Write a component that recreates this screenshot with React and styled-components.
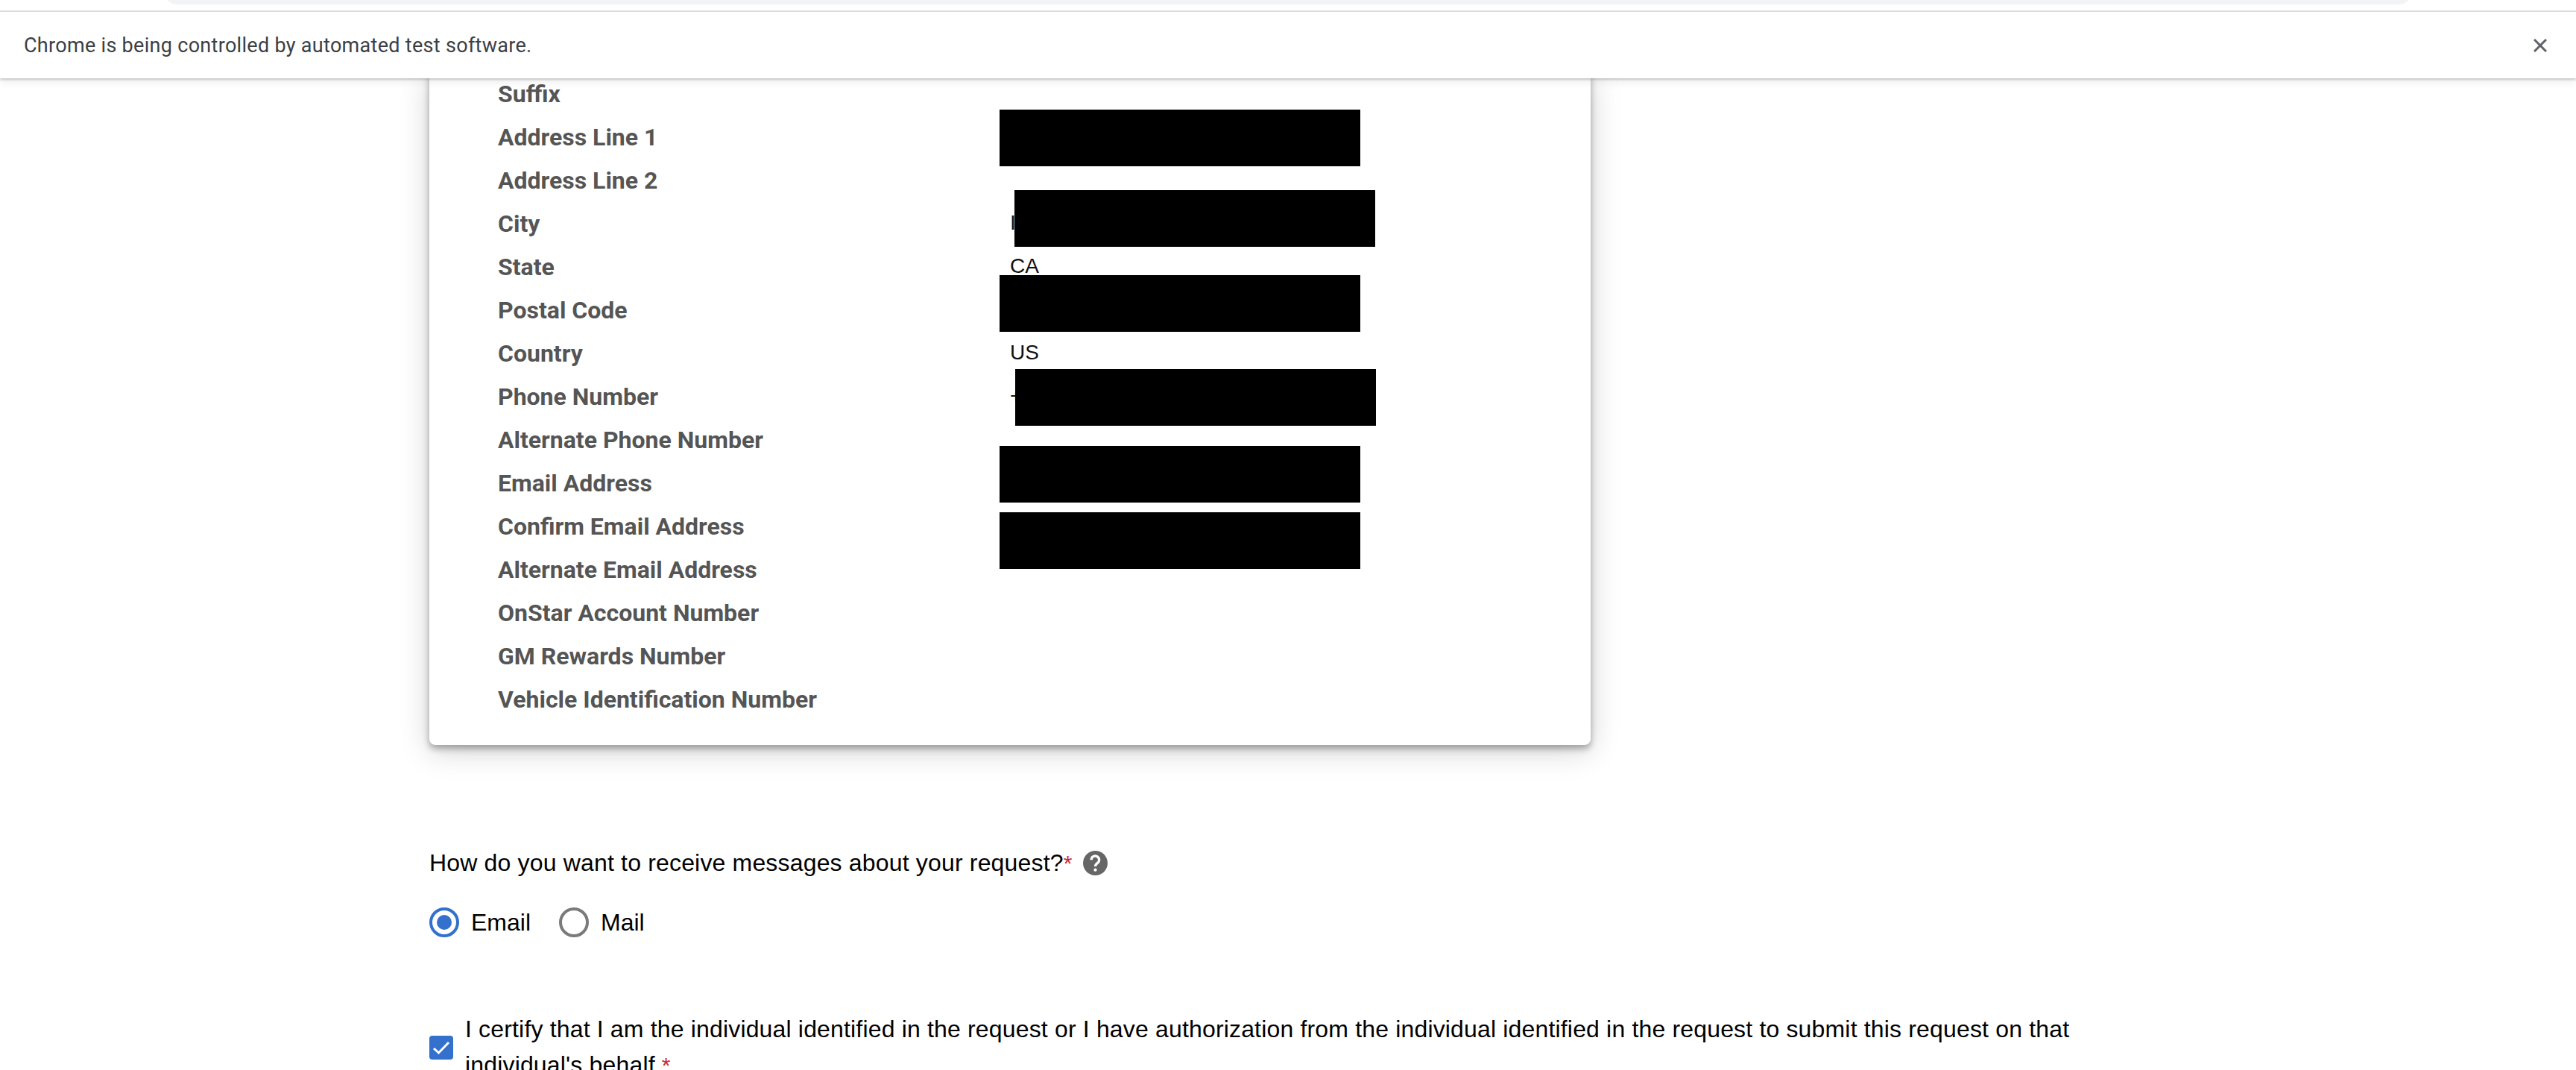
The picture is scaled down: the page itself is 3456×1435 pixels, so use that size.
import React from "react";
import styled, { createGlobalStyle } from "styled-components";

const GlobalStyle = createGlobalStyle`
  html, body {
    margin: 0;
    padding: 0;
    background: #fff;
  }
`;

const Page = styled.div`
  position: relative;
  width: 3456px;
  height: 1435px;
  overflow: hidden;
  background: #fff;
  font-family: "Liberation Sans", Arial, sans-serif;
  color: #000;
`;

const Chrome = styled.div`
  position: absolute;
  top: 0;
  left: 0;
  right: 0;
  z-index: 5;
  background: #fff;
  box-shadow: 0 2px 3px rgba(0, 0, 0, 0.2), 0 6px 12px rgba(0, 0, 0, 0.06);
`;

const TabStrip = styled.div`
  height: 14px;
  padding: 0 222px;
  overflow: hidden;
  border-bottom: 2px solid #dadce0;
`;

const AddressPill = styled.div`
  height: 30px;
  margin-top: -24px;
  background: #f1f3f4;
  border-radius: 24px;
`;

const InfoBar = styled.div`
  height: 89px;
  display: flex;
  align-items: center;
  justify-content: space-between;
  padding: 0 32px;
  font-family: Roboto, sans-serif;
  font-size: 27px;
  letter-spacing: 0.3px;
  color: #3c4043;
`;

const CloseIcon = styled.svg`
  width: 18px;
  height: 18px;
  margin-right: 7px;
  stroke: #5f6368;
  stroke-width: 3;
  fill: none;
`;

const Content = styled.div`
  width: 2304px;
  margin-left: 576px;
  padding-top: 97px;
`;

const Card = styled.div`
  position: relative;
  width: 1558px;
  box-sizing: border-box;
  padding: 0 92px 32px;
  border-radius: 0 0 8px 8px;
  box-shadow: 0 5px 10px rgba(0, 0, 0, 0.32), 0 8px 40px rgba(0, 0, 0, 0.18);
`;

const Row = styled.div`
  display: grid;
  grid-template-columns: 687px 1fr;
  align-items: center;
  height: 58px;
`;

const Label = styled.div`
  font-family: Roboto, sans-serif;
  font-weight: 700;
  font-size: 32px;
  color: #555;
`;

const Value = styled.div`
  padding-bottom: 2px;
  font-size: 28px;
  color: #111;
`;

const Redaction = styled.div`
  position: absolute;
  left: ${(p) => p.$x}px;
  top: ${(p) => p.$y}px;
  width: 484px;
  height: 76px;
  background: #000;
`;

const Question = styled.div`
  display: flex;
  align-items: center;
  margin-top: 136px;
  font-size: 32px;
  letter-spacing: 0.17px;
  line-height: 44px;
`;

const Required = styled.span`
  font-size: 30px;
  color: #cf2a36;
`;

const HelpIcon = styled.svg`
  width: 33px;
  height: 33px;
  margin-left: 14px;
`;

const RadioGroup = styled.div`
  display: flex;
  align-items: center;
  gap: 38px;
  margin-top: 37px;
`;

const RadioOption = styled.label`
  display: flex;
  align-items: center;
  gap: 16px;
  font-size: 32px;
`;

const RadioCircle = styled.span`
  display: flex;
  align-items: center;
  justify-content: center;
  width: 40px;
  height: 40px;
  box-sizing: border-box;
  border-radius: 50%;
  border: 4px solid ${(p) => (p.$checked ? "#3371cc" : "#7a7a7a")};

  &::after {
    content: "";
    display: ${(p) => (p.$checked ? "block" : "none")};
    width: 20px;
    height: 20px;
    border-radius: 50%;
    background: #3371cc;
  }
`;

const Certify = styled.div`
  display: flex;
  align-items: center;
  gap: 16px;
  margin-top: 99px;
  font-size: 32px;
  letter-spacing: 0.165px;
  line-height: 48px;
`;

const CheckBox = styled.span`
  flex: none;
  display: flex;
  align-items: center;
  justify-content: center;
  width: 32px;
  height: 32px;
  border-radius: 4px;
  background: #3371cc;
`;

const rows = [
  ["Suffix"],
  ["Address Line 1"],
  ["Address Line 2"],
  ["City", "I"],
  ["State", "CA"],
  ["Postal Code"],
  ["Country", "US"],
  ["Phone Number", "+1"],
  ["Alternate Phone Number"],
  ["Email Address"],
  ["Confirm Email Address"],
  ["Alternate Email Address"],
  ["OnStar Account Number"],
  ["GM Rewards Number"],
  ["Vehicle Identification Number"],
];

const redactions = [
  { x: 765, y: 50 },
  { x: 785, y: 158 },
  { x: 765, y: 272 },
  { x: 786, y: 398 },
  { x: 765, y: 501 },
  { x: 765, y: 590 },
];

export default function App() {
  return (
    <Page>
      <GlobalStyle />
      <Chrome>
        <TabStrip>
          <AddressPill />
        </TabStrip>
        <InfoBar>
          <span>Chrome is being controlled by automated test software.</span>
          <CloseIcon viewBox="0 0 18 18">
            <path d="M1 1 L17 17 M17 1 L1 17" />
          </CloseIcon>
        </InfoBar>
      </Chrome>
      <Content>
        <Card>
          {rows.map(([label, value]) => (
            <Row key={label}>
              <Label>{label}</Label>
              <Value>{value}</Value>
            </Row>
          ))}
          {redactions.map((r) => (
            <Redaction key={r.y} $x={r.x} $y={r.y} />
          ))}
        </Card>
        <Question>
          <span>
            How do you want to receive messages about your request?<Required>*</Required>
          </span>
          <HelpIcon viewBox="0 0 34 34">
            <circle cx="17" cy="17" r="17" fill="#666" />
            <path d="M11.5 12.5 a5.4 5.4 0 1 1 8.8 4.2 c-2.2 1.6 -3.3 2.6 -3.3 5" fill="none" stroke="#fff" strokeWidth="3.4" />
            <circle cx="17" cy="26.5" r="2.2" fill="#fff" />
          </HelpIcon>
        </Question>
        <RadioGroup>
          <RadioOption>
            <RadioCircle $checked />
            Email
          </RadioOption>
          <RadioOption>
            <RadioCircle />
            Mail
          </RadioOption>
        </RadioGroup>
        <Certify>
          <CheckBox>
            <svg width="24" height="20" viewBox="0 0 24 20" fill="none" stroke="#fff" strokeWidth="3">
              <path d="M2 11 L8.5 17 L22 3" />
            </svg>
          </CheckBox>
          <span>
            I certify that I am the individual identified in the request or I have authorization from the individual identified in the request to submit this request on that individual's behalf <Required>*</Required>
          </span>
        </Certify>
      </Content>
    </Page>
  );
}
